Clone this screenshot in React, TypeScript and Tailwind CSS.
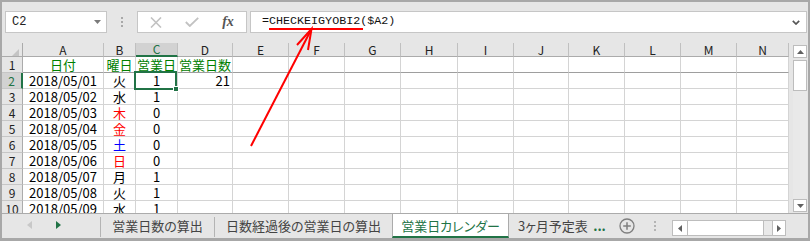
import React from 'react';

type Cell = { t: string; cls?: string; right?: boolean };

const G = 'text-[#008000]';
const RED = 'text-[#ff0000]';
const BLUE = 'text-[#0000ff]';

const data: Cell[][] = [
  [{ t: '日付', cls: G }, { t: '曜日', cls: G }, { t: '営業日', cls: G }, { t: '営業日数', cls: G }],
  [{ t: '2018/05/01' }, { t: '火' }, { t: '1' }, { t: '21', right: true }],
  [{ t: '2018/05/02' }, { t: '水' }, { t: '1' }],
  [{ t: '2018/05/03' }, { t: '木', cls: RED }, { t: '0' }],
  [{ t: '2018/05/04' }, { t: '金', cls: RED }, { t: '0' }],
  [{ t: '2018/05/05' }, { t: '土', cls: BLUE }, { t: '0' }],
  [{ t: '2018/05/06' }, { t: '日', cls: RED }, { t: '0' }],
  [{ t: '2018/05/07' }, { t: '月' }, { t: '1' }],
  [{ t: '2018/05/08' }, { t: '火' }, { t: '1' }],
  [{ t: '2018/05/09' }, { t: '水' }, { t: '1' }],
];

const COLS = ['A', 'B', 'C', 'D', 'E', 'F', 'G', 'H', 'I', 'J', 'K', 'L', 'M', 'N'];

function FormulaBar() {
  return (
    <div className="h-[41px] pt-[9px] flex items-start">
      {/* Name box */}
      <div className="ml-[3px] w-[102px] h-[22px] bg-white border border-[#c6c6c6] flex items-center justify-between pl-[6px] pr-[5px]">
        <span className="font-['Liberation_Mono',monospace] text-[12px] text-[#222]">C2</span>
        <svg width="7" height="4" viewBox="0 0 7 4">
          <polygon points="0,0 7,0 3.5,4" fill="#7a7a7a" />
        </svg>
      </div>
      {/* dots */}
      <div className="w-[30px] h-[22px] flex flex-col items-center justify-center gap-[2px]">
        <div className="w-[2px] h-[2px] bg-[#a8a8a8]" />
        <div className="w-[2px] h-[2px] bg-[#a8a8a8]" />
        <div className="w-[2px] h-[2px] bg-[#a8a8a8]" />
      </div>
      {/* icon box */}
      <div className="w-[110px] h-[22px] bg-white border border-[#c6c6c6] flex">
        <div className="w-[36px] flex items-center justify-center">
          <svg width="12" height="11" viewBox="0 0 12 11">
            <path d="M1 0.5 L11 10.5 M11 0.5 L1 10.5" stroke="#c2c2c2" strokeWidth="1.6" />
          </svg>
        </div>
        <div className="w-[36px] flex items-center justify-center">
          <svg width="14" height="10" viewBox="0 0 14 10">
            <path d="M0.8 5 L4.8 9 L13.2 0.8" stroke="#c2c2c2" strokeWidth="1.8" fill="none" />
          </svg>
        </div>
        <div className="w-[36px] flex items-center justify-center">
          <span className="font-['Liberation_Serif',serif] italic font-bold text-[14px] leading-none text-[#555]">fx</span>
        </div>
      </div>
      {/* formula */}
      <div className="ml-[3px] mr-[1px] flex-1 h-[22px] bg-white border border-[#c6c6c6] flex items-center justify-between pl-[11px] pr-[6px]">
        <span className="font-['Liberation_Mono',monospace] text-[11.7px] text-[#111]">=CHECKEIGYOBI2($A2)</span>
        <svg width="8" height="5" viewBox="0 0 8 5">
          <polyline points="0.8,0.8 4,4 7.2,0.8" stroke="#555" strokeWidth="1.7" fill="none" />
        </svg>
      </div>
    </div>
  );
}

function Grid() {
  return (
    <div className="w-[787px] h-[170px] overflow-hidden grid grid-cols-[21px_81px_32px_42px_55px_56px_56px_56px_57px_56px_55px_56px_56px_56px_52px] grid-rows-[14px_repeat(10,16px)] content-start">
      {/* header row */}
      <div className="h-[14px] bg-[#e6e6e6] border-r border-b border-[#ababab] flex items-end justify-end pr-[3px]">
        <svg width="7" height="7" viewBox="0 0 7 7">
          <polygon points="7,0 7,7 0,7" fill="#c4c4c4" />
        </svg>
      </div>
      {COLS.map((c) =>
        c === 'C' ? (
          <div
            key={c}
            className="h-[14px] bg-[#d2d2d2] text-[#217346] border-r border-r-[#c0c0c0] border-b-2 border-b-[#217346] flex items-center justify-center text-[12px] leading-none"
          >
            {c}
          </div>
        ) : (
          <div
            key={c}
            className="h-[14px] bg-[#e6e6e6] text-[#222] border-r border-r-[#c0c0c0] border-b border-b-[#ababab] flex items-center justify-center text-[12px] leading-none"
          >
            {c}
          </div>
        )
      )}
      {/* data rows */}
      {data.map((row, r) => (
        <React.Fragment key={r}>
          {r === 1 ? (
            <div className="h-[16px] bg-[#d2d2d2] text-[#217346] border-r-2 border-r-[#217346] border-b border-b-[#c6c6c6] flex items-center justify-center text-[12px] leading-none">
              {r + 1}
            </div>
          ) : (
            <div className="h-[16px] bg-[#e6e6e6] text-[#222] border-r border-r-[#ababab] border-b border-b-[#c6c6c6] flex items-center justify-center text-[12px] leading-none">
              {r + 1}
            </div>
          )}
          {COLS.map((c, ci) => {
            const cell = row[ci];
            const base =
              r === 0
                ? 'relative h-[16px] bg-white border-r border-r-[#d4d4d4] border-b border-b-[#9e9e9e] flex items-center text-[13px] leading-[15px] whitespace-nowrap'
                : 'relative h-[16px] bg-white border-r border-r-[#d4d4d4] border-b border-b-[#d4d4d4] flex items-center text-[13px] leading-[15px] whitespace-nowrap';
            const align = cell && cell.right ? 'justify-end pr-[2px]' : 'justify-center';
            return (
              <div key={c} className={`${base} ${align} ${cell?.cls ?? 'text-black'}`}>
                {cell ? cell.t : ''}
                {r === 1 && c === 'C' && (
                  <>
                    <div className="absolute left-[-2px] top-[-2px] w-[43px] h-[19px] border-2 border-[#217346] z-10 pointer-events-none" />
                    <div className="absolute left-[37px] top-[13px] w-[6px] h-[6px] bg-[#217346] border border-white z-20" />
                  </>
                )}
              </div>
            );
          })}
        </React.Fragment>
      ))}
    </div>
  );
}

function VScroll() {
  return (
    <div className="w-[19px] h-[170px] flex flex-col pl-[4px] pr-[1px]">
      <div className="mt-[2px] h-[13px] bg-white border border-[#bdbdbd] flex items-center justify-center">
        <svg width="7" height="4" viewBox="0 0 7 4">
          <polygon points="0,4 7,4 3.5,0" fill="#606060" />
        </svg>
      </div>
      <div className="mt-[2px] h-[31px] bg-white border border-[#bdbdbd]" />
      <div className="flex-1 bg-[#e9e9e9]" />
      <div className="h-[13px] mb-[1px] bg-white border border-[#bdbdbd] flex items-center justify-center">
        <svg width="7" height="4" viewBox="0 0 7 4">
          <polygon points="0,0 7,0 3.5,4" fill="#606060" />
        </svg>
      </div>
    </div>
  );
}

function Sep() {
  return <div className="w-px mt-[3px] mb-[1px] bg-[#b4b4b4]" />;
}

function TabBar() {
  return (
    <div className="h-[25px] border-t border-[#ababab] flex text-[13px] leading-none [font-feature-settings:'palt']">
      <div className="w-[98px] flex items-center pl-[25px] pb-[2px]">
        <svg width="5" height="8" viewBox="0 0 5 8">
          <polygon points="5,0 5,8 0,4" fill="#c8c8c8" />
        </svg>
        <svg className="ml-[24px]" width="5" height="8" viewBox="0 0 5 8">
          <polygon points="0,0 0,8 5,4" fill="#217346" />
        </svg>
      </div>
      <Sep />
      <div className="w-[113px] flex items-center justify-center pb-[2px] text-[#444] whitespace-nowrap">営業日数の算出</div>
      <Sep />
      <div className="w-[177px] flex items-center justify-center pb-[2px] text-[#444] whitespace-nowrap">日数経過後の営業日の算出</div>
      <div className="w-[117px] bg-white border-l border-r border-[#ababab] border-b-2 border-b-[#217346] flex items-center justify-center text-[#217346] whitespace-nowrap">
        営業日カレンダー
      </div>
      <div className="w-[81px] flex items-center pl-[9px] pb-[2px] text-[#444] whitespace-nowrap overflow-hidden">3ヶ月予定表</div>
      <div className="w-[19px] flex items-center justify-center pb-[2px] text-[#217346] font-bold">...</div>
      <div className="w-[36px] flex items-center justify-center">
        <svg width="16" height="16" viewBox="0 0 16 16">
          <circle cx="8" cy="8" r="7" stroke="#7f7f7f" strokeWidth="1.3" fill="none" />
          <path d="M8 4.2 V11.8 M4.2 8 H11.8" stroke="#7f7f7f" strokeWidth="1.5" />
        </svg>
      </div>
      <div className="w-[20px] flex flex-col items-center justify-center gap-[2px]">
        <div className="w-[2px] h-[2px] bg-[#b4b4b4]" />
        <div className="w-[2px] h-[2px] bg-[#b4b4b4]" />
        <div className="w-[2px] h-[2px] bg-[#b4b4b4]" />
      </div>
      <div className="w-[7px]" />
      <div className="w-[114px] h-[16px] mt-[6px] border border-[#bdbdbd] flex">
        <div className="w-[15px] bg-white border-r border-[#bdbdbd] flex items-center justify-center">
          <svg width="4" height="7" viewBox="0 0 4 7">
            <polygon points="4,0 4,7 0,3.5" fill="#606060" />
          </svg>
        </div>
        <div className="w-[76px] bg-white border-r border-[#bdbdbd]" />
        <div className="w-[8px] bg-[#e9e9e9]" />
        <div className="w-[13px] bg-white border-l border-[#bdbdbd] flex items-center justify-center">
          <svg width="4" height="7" viewBox="0 0 4 7">
            <polygon points="0,0 0,7 4,3.5" fill="#606060" />
          </svg>
        </div>
      </div>
      <div className="flex-1" />
    </div>
  );
}

export default function App() {
  return (
    <div className="relative w-[810px] h-[241px] overflow-hidden font-['Noto_Sans_CJK_JP',sans-serif] text-black">
      <div className="flex flex-col w-full h-full bg-[#e6e6e6] border-2 border-b-[3px] border-[#a8a8a8]">
        <FormulaBar />
        <div className="flex h-[170px]">
          <Grid />
          <VScroll />
        </div>
        <TabBar />
      </div>
      <svg className="absolute left-0 top-0 pointer-events-none" width="810" height="241" viewBox="0 0 810 241">
        <rect x="269" y="28" width="94" height="2" fill="#ff0000" />
        <line x1="251" y1="146" x2="311" y2="30" stroke="#ff0000" strokeWidth="2" />
        <polyline points="297,45 311.5,29 308,50" fill="none" stroke="#ff0000" strokeWidth="2" />
      </svg>
    </div>
  );
}
